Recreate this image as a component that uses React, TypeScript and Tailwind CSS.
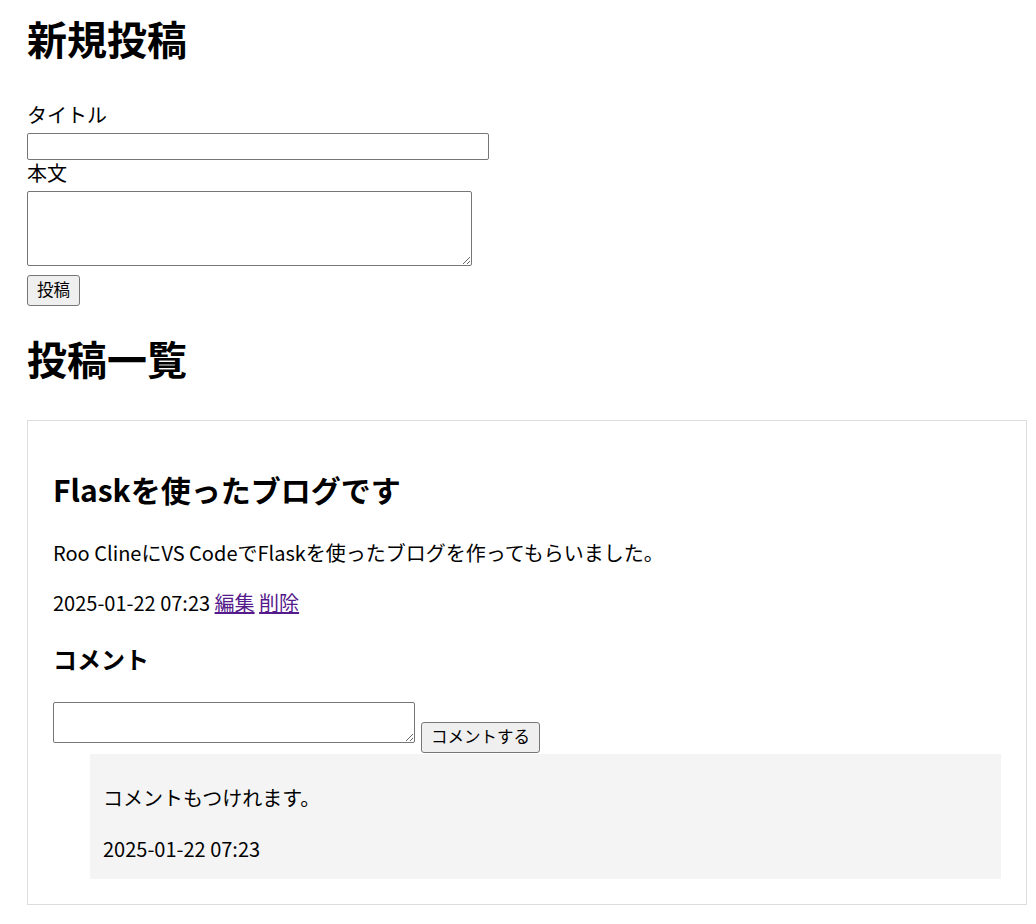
import React from "react";

export default function App() {
  return (
    <div className="min-h-screen bg-white pl-[27px] pr-[9px] pt-[14px] pb-[20px] font-[family-name:'Noto_Sans_CJK_JP',sans-serif] text-[20px] text-black">
      <h1 className="text-[40px] leading-[48px] font-bold">新規投稿</h1>
      <form className="mt-[35px] flex flex-col items-start" onSubmit={(e) => e.preventDefault()}>
        <label className="pt-[2px] leading-[32px]">タイトル</label>
        <input
          type="text"
          className="mt-[2px] h-[27px] w-[462px] rounded-[2px] border border-[#767676] bg-white px-[2px] text-[16px]"
        />
        <label className="pt-[1px] leading-[24px]">本文</label>
        <textarea className="mt-[6px] h-[75px] w-[445px] rounded-[2px] border border-[#767676] bg-white text-[16px]" />
        <button
          type="submit"
          className="mt-[9px] h-[31px] rounded-[3px] border border-[#767676] bg-[#efefef] px-[9px] pb-[3px] text-[16.5px] leading-[20px]"
        >
          投稿
        </button>
      </form>

      <h2 className="mt-[28px] text-[40px] leading-[48px] font-bold">投稿一覧</h2>

      <div className="mt-[38px] border border-[#dddddd] px-[25px] pt-[25px] pb-[25px]">
        <h3 className="mt-[25px] text-[30px] leading-[36px] font-bold">Flaskを使ったブログです</h3>
        <p className="mt-[32px] leading-[28px]">Roo ClineにVS CodeでFlaskを使ったブログを作ってもらいました。</p>
        <p className="mt-[22px] leading-[28px]">
          2025-01-22 07:23{" "}
          <a href="#" className="text-[#551a8b] underline">
            編集
          </a>{" "}
          <a href="#" className="text-[#551a8b] underline">
            削除
          </a>
        </p>
        <h4 className="mt-[27px] text-[24px] leading-[30px] font-bold">コメント</h4>
        <form className="mt-[28px] flex items-start gap-[6px]" onSubmit={(e) => e.preventDefault()}>
          <textarea className="h-[41px] w-[362px] rounded-[2px] border border-[#767676] bg-white text-[16px]" />
          <button
            type="submit"
            className="mt-[20px] h-[31px] rounded-[3px] border border-[#767676] bg-[#efefef] px-[9px] pb-[3px] text-[16.5px] leading-[20px]"
          >
            コメントする
          </button>
        </form>
        <div className="mt-[1px] ml-[37px] bg-[#f4f4f4] pl-[13px] pt-[30px] pb-[18px]">
          <p className="leading-[28px]">コメントもつけれます。</p>
          <p className="mt-[25px] leading-[24px]">2025-01-22 07:23</p>
        </div>
      </div>
    </div>
  );
}
